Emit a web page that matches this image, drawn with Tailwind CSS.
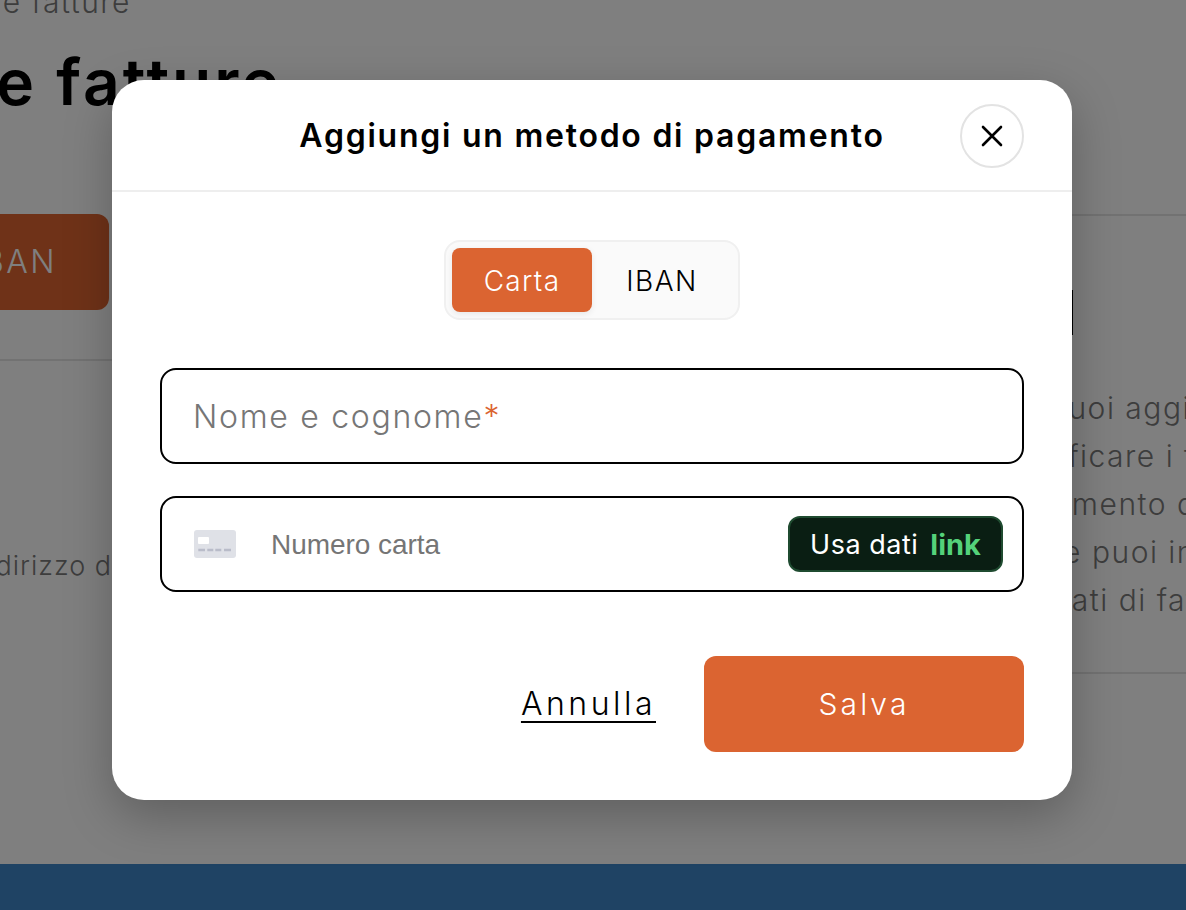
<!DOCTYPE html>
<html lang="it">
<head>
<meta charset="utf-8">
<title>Metodo di pagamento</title>
<script src="https://cdn.jsdelivr.net/npm/@tailwindcss/browser@4"></script>
</head>
<body class="m-0 bg-white">
<div class="relative flex h-[910px] w-[1186px] flex-col overflow-hidden bg-white font-['Inter',sans-serif]">
  <main class="flex min-h-0 flex-1 flex-col">
    <div class="-mt-[14px] flex h-[32px] w-[131px] items-center justify-end whitespace-nowrap text-[30px] font-light tracking-[1.5px] text-[#7a7a7a]">Pagamenti e fatture</div>
    <div class="mt-[26px] flex h-[76px] w-[282px] items-center justify-end whitespace-nowrap text-[64px] font-semibold tracking-[3px] text-black">Pagamenti e fatture</div>
    <div class="mt-[94px] flex flex-1 justify-between">
      <div class="flex w-[112px] flex-col">
        <div class="flex h-[96px] w-[109px] items-center justify-end rounded-r-[12px] bg-[#de6430] pr-[52px] whitespace-nowrap text-[32px] font-light tracking-[2.5px] text-white">Aggiungi IBAN</div>
        <div class="mt-[49px] h-[2px] bg-[#e4e4e4]"></div>
        <div class="mt-[185px] flex w-[112px] justify-end whitespace-nowrap text-[27px] font-light leading-[40px] tracking-[1px] text-[#7a7a7a]">Il tuo indirizzo d</div>
      </div>
      <div class="w-[186px] overflow-hidden">
        <div class="h-[2px] bg-[#e4e4e4]"></div>
        <div class="ml-[72px] mt-[74px] h-[45px] w-[1px] bg-black"></div>
        <div class="mt-[49px] whitespace-nowrap text-[30px] font-light leading-[48px] tracking-[1.5px] text-[#7a7a7a]">
          <p class="-ml-[13px]">Qui puoi aggiungere</p>
          <p class="ml-[8px]">Verificare i tuoi</p>
          <p class="-ml-[4px]">Pagamento da</p>
          <p class="-ml-[16px]">Inoltre puoi inserire</p>
          <p class="ml-[33px]">I dati di fatturazione</p>
        </div>
        <div class="mt-[48px] h-[2px] bg-[#e4e4e4]"></div>
      </div>
    </div>
  </main>
  <footer class="h-[46px] shrink-0 bg-[#3e86c8]"></footer>

  <div class="absolute inset-0 flex items-start justify-center bg-black/50 pr-[2px] pt-[80px]">
    <section class="flex h-[720px] w-[960px] flex-col rounded-[32px] bg-white shadow-[0_16px_48px_rgba(0,0,0,0.25)]">
      <header class="flex h-[112px] shrink-0 items-center justify-center border-b-2 border-[#eeeeee] px-[48px] pt-[2px]">
        <h2 class="flex-1 pl-[64px] text-center text-[32px] font-semibold tracking-[1.75px] text-black">Aggiungi un metodo di pagamento</h2>
        <button class="flex size-[64px] shrink-0 items-center justify-center rounded-full border-2 border-[#e3e3e3] bg-white">
          <svg width="24" height="24" viewBox="0 0 24 24" fill="none" stroke="#000" stroke-width="2.6" stroke-linecap="round"><path d="M3 3 21 21M21 3 3 21"/></svg>
        </button>
      </header>
      <div class="flex flex-1 flex-col px-[48px]">
        <div class="mt-[48px] flex h-[80px] w-[296px] self-center rounded-[16px] border-2 border-[#f0f0f0] bg-[#fafafa] p-[6px]">
          <button class="h-[64px] w-[140px] rounded-[8px] bg-[#db6431] pt-[1px] text-[28px] font-light tracking-[1.3px] text-white shadow-[0_2px_6px_rgba(0,0,0,0.08)]">Carta</button>
          <button class="h-[64px] w-[140px] pt-[1px] text-[28px] font-light tracking-[1.5px] text-black">IBAN</button>
        </div>
        <div class="mt-[48px] flex h-[96px] items-center rounded-[16px] border-2 border-black pl-[31px] pt-[1px] text-[32px] font-light tracking-[1.7px] text-[#767676]">Nome e cognome<span class="text-[#db6431]">*</span></div>
        <div class="mt-[32px] flex h-[96px] items-center rounded-[16px] border-2 border-black pl-[32px] pr-[19px]">
          <svg width="42" height="28" viewBox="0 0 42 28" class="shrink-0">
            <rect width="42" height="28" rx="3" fill="#dfe1e7"/>
            <rect x="4" y="7" width="11" height="7" rx="1" fill="#fff"/>
            <path d="M4.3 20h6.7M13.3 20h6M21.3 20h6M30 20h7" stroke="#b9bcc9" stroke-width="2.5"/>
          </svg>
          <span class="ml-[35px] pt-[2px] font-['Liberation_Sans',sans-serif] text-[28px] tracking-[-0.05px] text-[#757575]">Numero carta</span>
          <div class="ml-auto flex h-[56px] w-[215px] items-center justify-center gap-[12px] rounded-[12px] border-2 border-[#1f4b30] bg-[#0a1e13]">
            <span class="pt-[2px] text-[27px] tracking-[0.5px] text-white">Usa dati</span>
            <span class="text-[29px] font-bold leading-none text-[#54d27a]">link</span>
          </div>
        </div>
        <div class="mt-[64px] flex items-center justify-end gap-[48px]">
          <a class="text-[32px] font-light tracking-[3.5px] text-black underline decoration-2 underline-offset-[6px]">Annulla</a>
          <button class="h-[96px] w-[320px] rounded-[12px] bg-[#db6431] text-[30px] font-light tracking-[3.1px] text-white">Salva</button>
        </div>
      </div>
    </section>
  </div>
</div>
</body>
</html>
